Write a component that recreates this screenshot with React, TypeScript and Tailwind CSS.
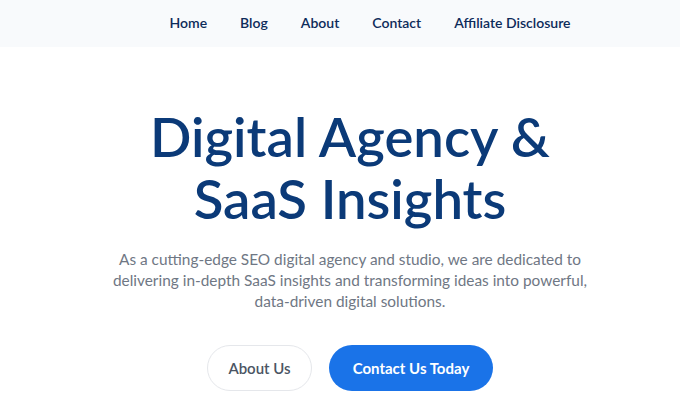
import React from 'react';

const navLinks: string[] = ['Home', 'Blog', 'About', 'Contact', 'Affiliate Disclosure'];

const App: React.FC = () => {
  return (
    <div className="min-h-screen bg-white" style={{ fontFamily: 'Lato, "Noto Sans", sans-serif' }}>
      {/* top navigation */}
      <header className="h-[47px] bg-[#f8fafc] flex items-center justify-center pl-[60px] pb-[3px]">
        <nav className="flex items-center gap-[33px]">
          {navLinks.map((link) => (
            <a key={link} href="#" className="text-[14px] font-semibold text-[#0d2b5a]">
              {link}
            </a>
          ))}
        </nav>
      </header>

      {/* hero */}
      <section className="flex flex-col items-center text-center pt-[58px] pl-[20px]">
        <h1 className="text-[54.5px] leading-[62px] font-semibold text-[#0b3a78]">
          Digital Agency &amp;
          <br />
          SaaS Insights
        </h1>
        <p className="mt-[20px] w-[480px] text-[15.4px] leading-[21px] text-[#6f7784]">
          As a cutting-edge SEO digital agency and studio, we are dedicated to delivering in-depth
          SaaS insights and transforming ideas into powerful, data-driven digital solutions.
        </p>
        <div className="mt-[33px] flex items-center gap-[17px]">
          <button
            type="button"
            className="h-[46px] w-[105px] rounded-full border border-[#e5e7eb] bg-white text-[15px] font-semibold text-[#4b5563]"
          >
            About Us
          </button>
          <button
            type="button"
            className="h-[46px] w-[164px] rounded-full bg-[#1a73e8] text-[15px] font-bold text-white"
          >
            Contact Us Today
          </button>
        </div>
      </section>
    </div>
  );
};

export default App;
